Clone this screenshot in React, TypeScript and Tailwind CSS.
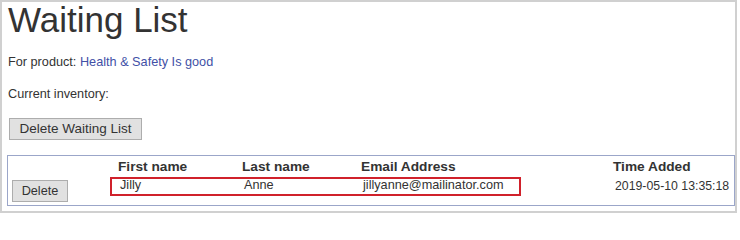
const font = { fontFamily: '"Liberation Sans", Arial, sans-serif' };

const columns = 'grid grid-cols-[104px_124px_119px_252px_1fr]';

export default function App() {
  return (
    <div style={font} className="bg-white w-[740px] h-[214px]">
      <div className="w-[737px] h-[213px] border-2 border-[#d0d0d0] pl-[6px] text-[#333]">
        <h1 className="text-[35px] leading-[36px] font-normal">Waiting List</h1>
        <p className="mt-[17px] text-[12.7px] leading-[15px]">
          For product: <a className="text-[#4150a6]">Health &amp; Safety Is good</a>
        </p>
        <p className="mt-[17px] text-[12.7px] leading-[15px]">Current inventory:</p>
        <button className="mt-[16px] ml-px h-[22px] w-[133px] bg-[#e1e1e1] border border-[#adadad] text-[13.5px] text-[#333]">
          Delete Waiting List
        </button>

        {/* waiting list table */}
        <div className="mt-[15px] -ml-px border border-[#9ba6c9]">
          <div className={`${columns} h-[21px] pt-[3px] text-[13.7px] leading-[16px] font-bold`}>
            <div />
            <div className="pl-[6px]">First name</div>
            <div className="pl-[6px]">Last name</div>
            <div className="pl-[6px]">Email Address</div>
            <div className="pl-[6px]">Time Added</div>
          </div>
          <div className={`${columns} relative h-[28px] text-[12.7px] leading-[15px]`}>
            <div className="pt-[3px] pl-[4px]">
              <button className="h-[22px] w-[56px] bg-[#e1e1e1] border border-[#adadad] text-[12.7px] text-[#333]">
                Delete
              </button>
            </div>
            <div className="pl-[8px] pt-px">Jilly</div>
            <div className="pl-[8px] pt-px">Anne</div>
            <div className="pl-[8px] pt-px">jillyanne@mailinator.com</div>
            <div className="pl-[8px] pt-[2px] text-[12.3px]">2019-05-10 13:35:18</div>
            <div className="absolute top-0 left-[102px] w-[411px] h-[19px] border-2 border-[#d0212b]" />
          </div>
        </div>
      </div>
    </div>
  );
}
